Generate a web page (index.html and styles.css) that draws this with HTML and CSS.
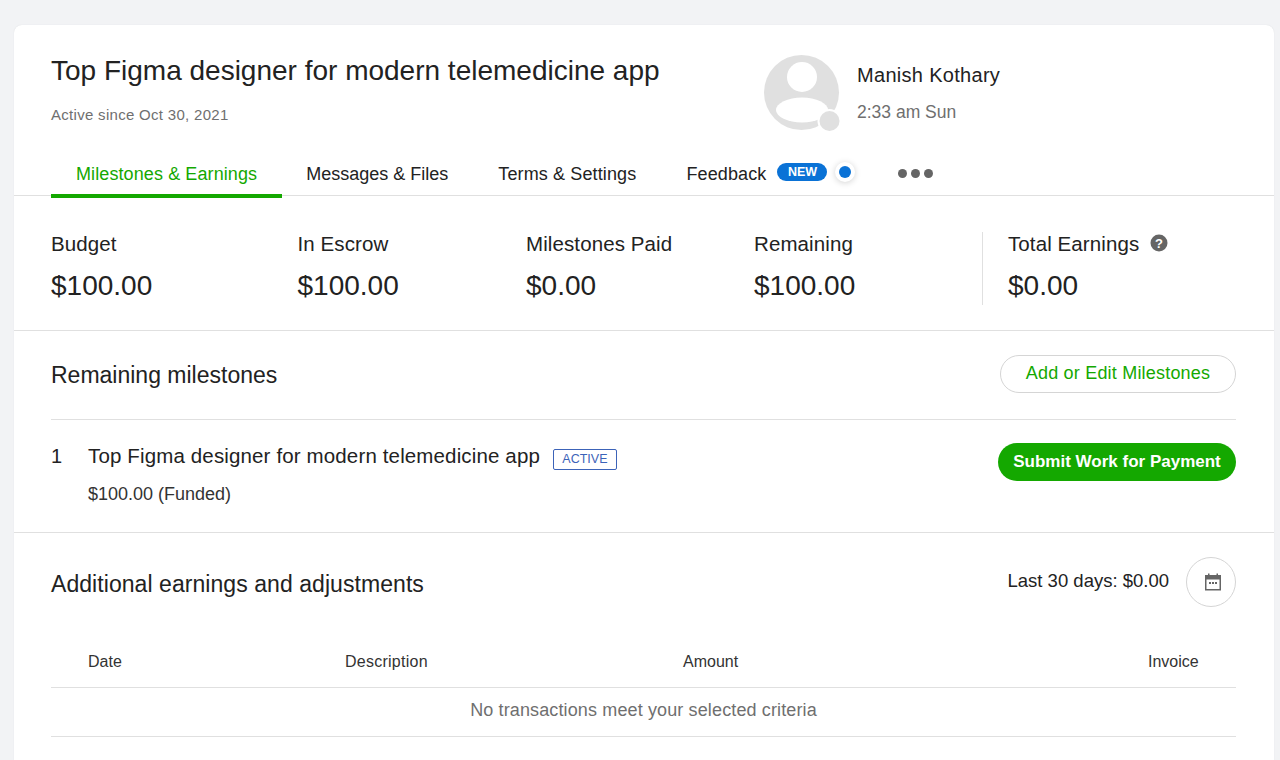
FILE: index.html
```html
<!DOCTYPE html>
<html lang="en">
<head>
<meta charset="utf-8">
<title>Contract</title>
<link rel="stylesheet" href="styles.css">
</head>
<body>
<main class="card">
  <header class="head">
    <div class="head-title">
      <h1>Top Figma designer for modern telemedicine app</h1>
      <p class="since">Active since Oct 30, 2021</p>
    </div>
    <div class="person">
      <div class="avatar">
        <svg width="78" height="78" viewBox="0 0 78 78">
          <circle cx="37.500" cy="37.500" r="37.500" fill="#e0e0e0"/>
          <circle cx="38" cy="22" r="15" fill="#fff"/>
          <ellipse cx="38" cy="55" rx="26" ry="12.500" fill="#fff"/>
          <circle cx="65.500" cy="66" r="12" fill="#fff"/>
          <circle cx="65.500" cy="66" r="10" fill="#e0e0e0"/>
        </svg>
      </div>
      <div class="person-text">
        <div class="person-name">Manish Kothary</div>
        <div class="person-time">2:33 am Sun</div>
      </div>
    </div>
  </header>
  <nav class="tabs">
    <a class="tab tab-active">Milestones &amp; Earnings</a>
    <a class="tab">Messages &amp; Files</a>
    <a class="tab tab-wide">Terms &amp; Settings</a>
    <a class="tab tab-wide tab-feedback">Feedback <span class="badge">NEW</span><span class="pulse"></span></a>
    <a class="tab tab-more"><span class="dot"></span><span class="dot"></span><span class="dot"></span></a>
  </nav>
  <section class="stats">
    <div class="stat stat-a"><div class="stat-label">Budget</div><div class="stat-value">$100.00</div></div>
    <div class="stat stat-b"><div class="stat-label">In Escrow</div><div class="stat-value">$100.00</div></div>
    <div class="stat stat-c"><div class="stat-label">Milestones Paid</div><div class="stat-value">$0.00</div></div>
    <div class="stat stat-c"><div class="stat-label">Remaining</div><div class="stat-value">$100.00</div></div>
    <div class="stat stat-total">
      <div class="stat-label">Total Earnings
        <svg class="help" width="18" height="18" viewBox="0 0 18 18"><circle cx="9" cy="9" r="8.500" fill="#656565"/><text x="9" y="13.500" text-anchor="middle" class="help-mark">?</text></svg>
      </div>
      <div class="stat-value">$0.00</div>
    </div>
  </section>
  <section class="remaining">
    <div class="section-row">
      <h2>Remaining milestones</h2>
      <button class="btn-outline">Add or Edit Milestones</button>
    </div>
    <div class="milestone">
      <div class="ms-num">1</div>
      <div class="ms-body">
        <div class="ms-title">Top Figma designer for modern telemedicine app <span class="tag">ACTIVE</span></div>
        <div class="ms-amount">$100.00 (Funded)</div>
      </div>
      <button class="btn-solid">Submit Work for Payment</button>
    </div>
  </section>
  <section class="additional">
    <div class="add-row">
      <h2>Additional earnings and adjustments</h2>
      <div class="add-right">
        <span class="last">Last 30 days: $0.00</span>
        <button class="btn-cal">
          <svg width="18" height="18" viewBox="0 0 18 18"><path d="M4 0.500h1.500v1.500h7V0.500H14v1.500h3v15.500H1V2h3z" fill="#656565"/><rect x="2.500" y="6.500" width="13" height="9.500" fill="#fff"/><rect x="5" y="9" width="2" height="2" fill="#656565"/><rect x="8" y="9" width="2" height="2" fill="#656565"/><rect x="11" y="9" width="2" height="2" fill="#656565"/></svg>
        </button>
      </div>
    </div>
    <div class="table-head">
      <span class="col col-date">Date</span>
      <span class="col col-desc">Description</span>
      <span class="col col-amount">Amount</span>
      <span class="col col-invoice">Invoice</span>
    </div>
    <div class="table-empty">No transactions meet your selected criteria</div>
  </section>
</main>
</body>
</html>
```
FILE: styles.css
```css
* { box-sizing: border-box; }
html, body { height: 100%; }
body {
  margin: 0;
  padding: 25px 6px 0 14px;
  height: 760px;
  overflow: hidden;
  background: #f2f3f5;
  font-family: "Liberation Sans", Arial, sans-serif;
  color: #222;
}
.card {
  background: #fff;
  border-radius: 8px 8px 0 0;
  height: 735px;
  box-shadow: 0 0 1px #d5d7da;
}
h1, h2, p { margin: 0; font-weight: 400; }

.head { display: flex; padding: 29px 37px 0; height: 130px; }
.head-title { width: 713px; }
h1 { font-size: 28px; line-height: 33px; }
.since { margin-top: 19px; font-size: 15px; letter-spacing: .3px; line-height: 18px; color: #6f6f6f; }
.person { display: flex; margin-top: 1px; }
.avatar { height: 78px; }
.avatar svg { display: block; }
.person-text { margin-left: 15px; }
.person-name { font-size: 20px; letter-spacing: .3px; line-height: 24px; margin-top: 8px; color: #222; }
.person-time { font-size: 17.500px; line-height: 22px; margin-top: 14px; color: #6f6f6f; }

.tabs { display: flex; height: 41px; padding-left: 37px; border-bottom: 1px solid #e0e0e0; }
.tab { display: flex; align-items: center; height: 43px; padding-bottom: 5px; font-size: 18px; color: #222; margin-right: 50px; }
.tab-wide { letter-spacing: .13px; }
.tab-active { color: #14a800; letter-spacing: .1px; border-bottom: 4px solid #14a800; padding: 0 25px 1px; margin-right: 24px; }
.tab-feedback { margin-right: 47px; }
.badge { margin: 0 0 5px 11px; background: #0a72d6; color: #fff; font-size: 12.500px; letter-spacing: 0; font-weight: 700; line-height: 18px; height: 18px; width: 50px; text-align: center; border-radius: 9px; }
.pulse { margin: 0 0 4px 12px; width: 12px; height: 12px; border-radius: 50%; background: #0a72d6; box-shadow: 0 0 0 4px #fff, 0 1px 6px 4px rgba(0,0,0,.18); }
.tab-more { margin: 0; gap: 4px; }
.dot { width: 9px; height: 9px; margin-bottom: 2px; border-radius: 50%; background: #656565; }

.stats { display: flex; height: 135px; padding: 36px 37px 0; border-bottom: 1px solid #e0e0e0; }
.stat-a { width: 246.500px; }
.stat-b { width: 228.500px; }
.stat-c { width: 228px; }
.stat-total { border-left: 1px solid #e0e0e0; padding-left: 25px; height: 73px; }
.stat-label { font-size: 20.500px; letter-spacing: .1px; line-height: 24px; display: flex; align-items: center; color: #222; }
.stat-value { font-size: 28px; line-height: 34px; margin-top: 13px; color: #222; }
.help { margin-left: 11px; margin-top: -3px; }
.help-mark { font-size: 13px; font-weight: 700; fill: #fff; font-family: "Liberation Sans", Arial, sans-serif; }

.remaining { padding: 0 38px 0 37px; height: 202px; border-bottom: 1px solid #e0e0e0; }
.section-row { display: flex; justify-content: space-between; align-items: center; height: 89px; border-bottom: 1px solid #e0e0e0; }
h2 { font-size: 23px; line-height: 28px; color: #222; }
.btn-outline { width: 236px; height: 38px; margin-bottom: 2px; border: 1px solid #d5d5d5; border-radius: 19px; background: #fff; color: #14a800; font: 18px "Liberation Sans", Arial, sans-serif; letter-spacing: .2px; padding: 0 0 2px; }
.milestone { display: flex; align-items: flex-start; padding-top: 23px; }
.ms-num { width: 37px; font-size: 20px; line-height: 26px; color: #222; }
.ms-body { flex: 1; }
.ms-title { font-size: 20.500px; letter-spacing: .14px; line-height: 26px; color: #222; }
.tag { display: inline-block; margin-left: 7px; height: 21px; line-height: 19px; padding: 0 8.500px; font-size: 12.500px; letter-spacing: 0; color: #3c63b8; border: 1px solid #3c63b8; border-radius: 2px; vertical-align: 0; }
.ms-amount { font-size: 18px; line-height: 22px; margin-top: 13px; color: #333; }
.btn-solid { width: 238px; height: 38px; margin-top: 0; border: 0; border-radius: 19px; background: #14a800; color: #fff; font: 700 17px "Liberation Sans", Arial, sans-serif; }

.additional { padding: 0 38px 0 37px; }
.add-row { display: flex; justify-content: space-between; align-items: center; height: 100px; padding-top: 1px; }
.add-row h2 { letter-spacing: .06px; }
.add-right { display: flex; align-items: center; padding-bottom: 4px; }
.last { font-size: 18.500px; margin-right: 17px; margin-top: -1px; color: #222; }
.btn-cal { width: 50px; height: 50px; border-radius: 50%; border: 1px solid #d5d5d5; background: #fff; padding: 0 0 0 3px; display: flex; align-items: center; justify-content: center; }
.btn-cal svg { display: block; }
.table-head { display: flex; height: 55px; padding-top: 19px; border-bottom: 1px solid #e0e0e0; font-size: 16px; line-height: 20px; color: #333; }
.col { display: block; }
.col-date { margin-left: 37px; width: 257px; }
.col-desc { width: 338px; letter-spacing: .25px; }
.col-amount { width: 465px; }
.table-empty { height: 49px; line-height: 45px; text-align: center; font-size: 18px; letter-spacing: .13px; color: #6f6f6f; border-bottom: 1px solid #e0e0e0; }
```
